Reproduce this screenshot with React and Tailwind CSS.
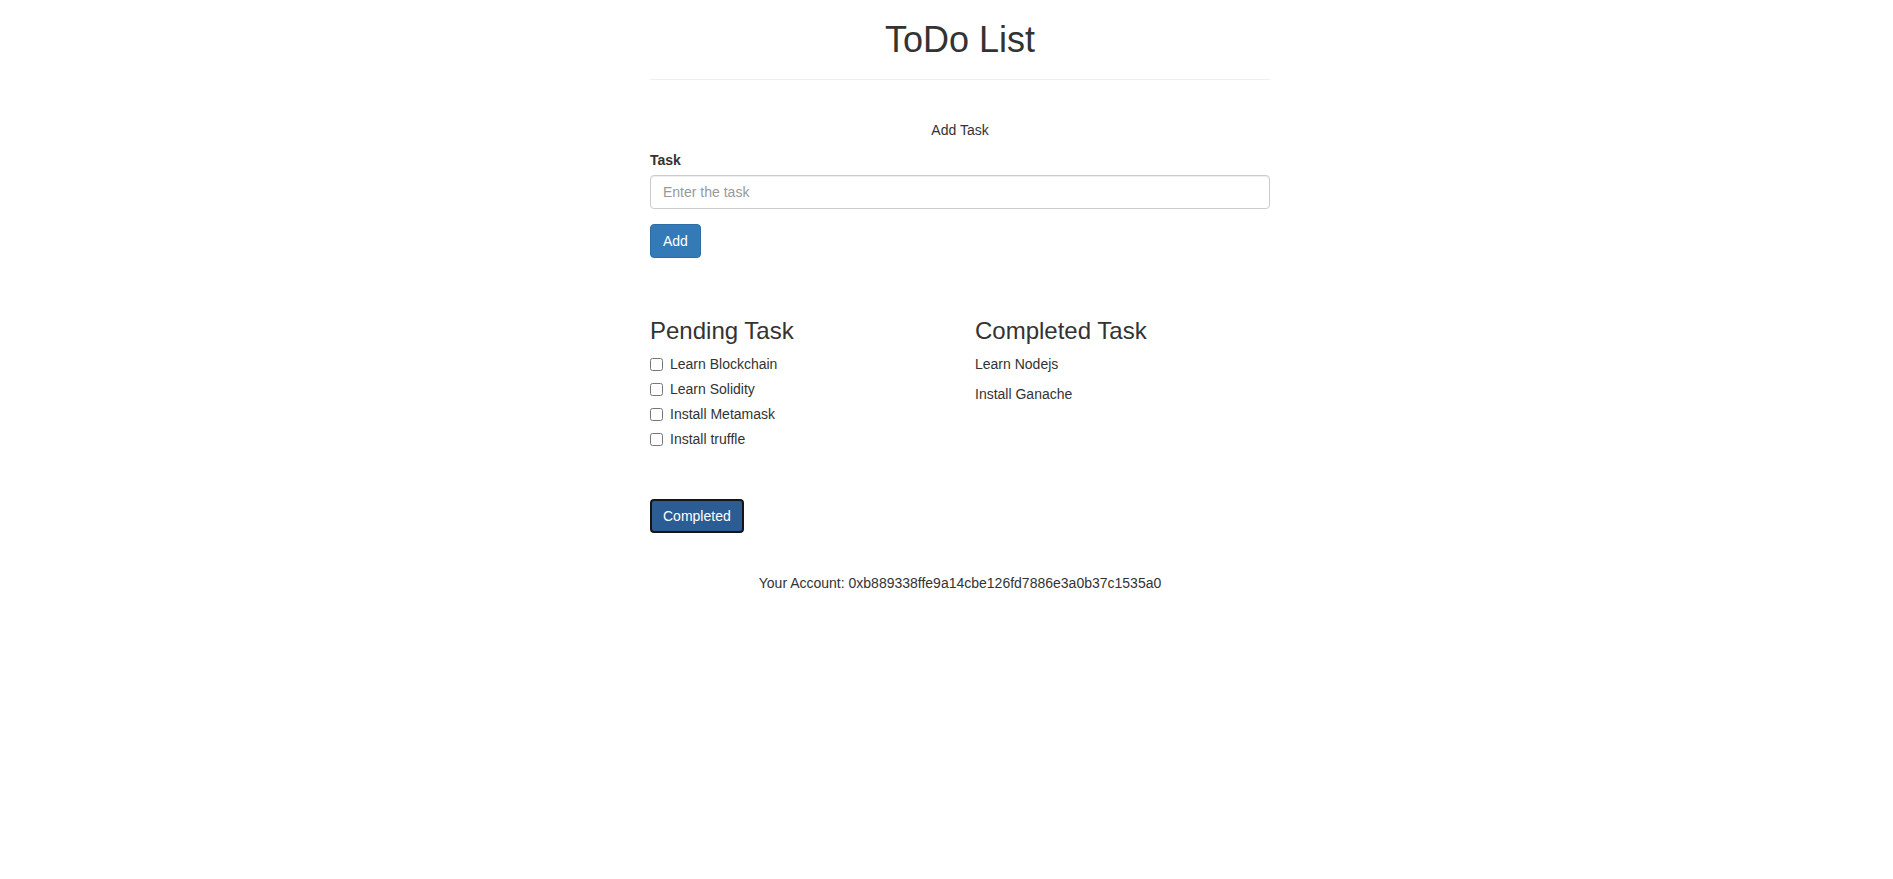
import React from 'react'

const pending = ['Learn Blockchain', 'Learn Solidity', 'Install Metamask', 'Install truffle']
const completed = ['Learn Nodejs', 'Install Ganache']

export default function App() {
  return (
    <div className="min-h-screen bg-white font-['Liberation_Sans',Arial,sans-serif] text-[14px] leading-[20px] text-[#333]">
      <div className="flex justify-center pl-[27px]">
        <div className="w-[620px]">
          {/* ── Page header ─────────────────────────────────────────── */}
          <div className="pb-[9px] border-b border-[#eee]">
            <h1 className="mt-[20px] mb-[10px] text-center text-[36px] leading-[39.6px] font-normal">ToDo List</h1>
          </div>

          {/* ── Add task form ───────────────────────────────────────── */}
          <p className="mt-[40px] mb-[10px] text-center">Add Task</p>
          <form onSubmit={(e) => e.preventDefault()}>
            <div className="mb-[15px]">
              <label className="block mb-[5px] font-bold">Task</label>
              <input
                type="text"
                placeholder="Enter the task"
                className="block w-full h-[34px] px-[12px] py-[6px] border border-[#ccc] rounded-[4px] shadow-[inset_0_1px_1px_rgba(0,0,0,0.075)] placeholder:text-[#999] outline-none"
              />
            </div>
            <button type="submit" className="h-[34px] px-[12px] border border-[#2e6da4] bg-[#337ab7] text-white rounded-[4px]">
              Add
            </button>
          </form>

          {/* ── Task lists ──────────────────────────────────────────── */}
          <div className="grid grid-cols-2 gap-x-[30px] mt-[40px]">
            <div>
              <h3 className="mt-[20px] mb-[10px] text-[24px] leading-[26.4px] font-normal">Pending Task</h3>
              <div className="flex flex-col gap-[5px]">
                {pending.map((t) => (
                  <label key={t} className="flex items-center h-[20px]">
                    <input type="checkbox" className="w-[13px] h-[13px] m-0" />
                    <span className="ml-[7px]">{t}</span>
                  </label>
                ))}
              </div>
            </div>
            <div>
              <h3 className="mt-[20px] mb-[10px] text-[24px] leading-[26.4px] font-normal">Completed Task</h3>
              <div className="flex flex-col gap-[10px]">
                {completed.map((t) => (
                  <p key={t}>{t}</p>
                ))}
              </div>
            </div>
          </div>

          <button className="mt-[50px] h-[34px] px-[11px] border-2 border-[#151515] bg-[#2b5d94] text-white rounded-[4px]">
            Completed
          </button>

          <p className="mt-[40px] text-center">Your Account: 0xb889338ffe9a14cbe126fd7886e3a0b37c1535a0</p>
        </div>
      </div>
    </div>
  )
}
